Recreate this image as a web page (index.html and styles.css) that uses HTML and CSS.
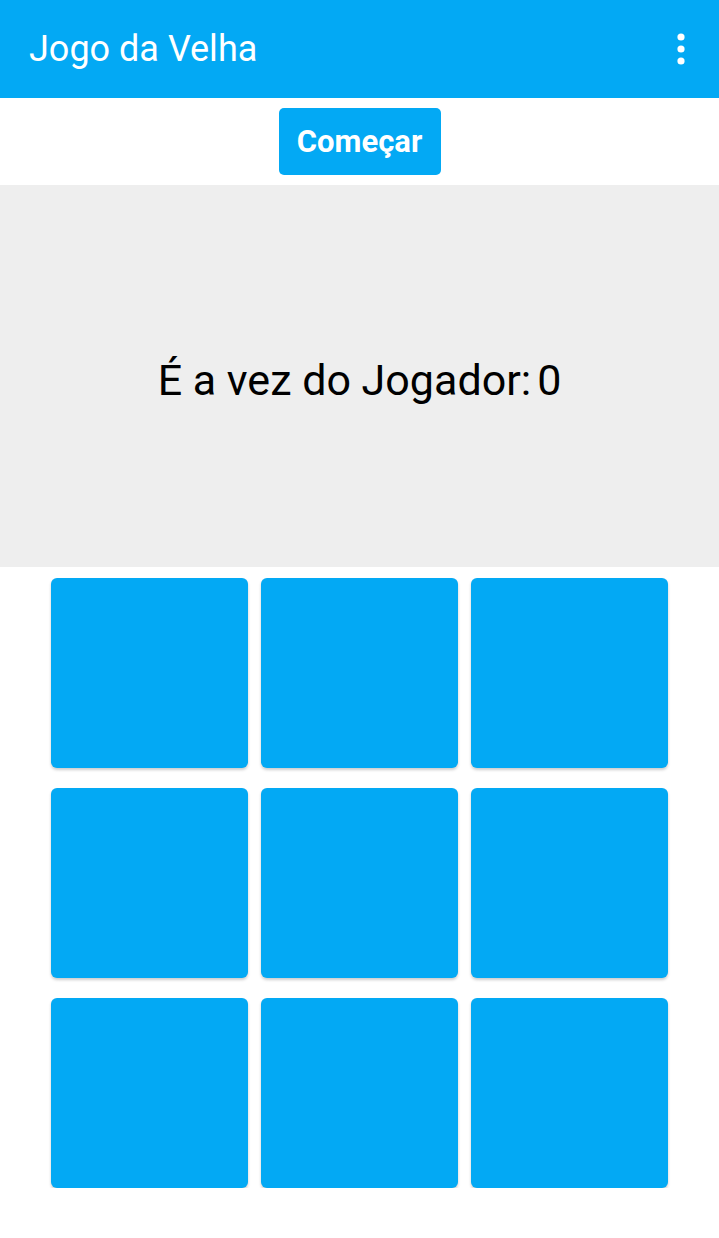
FILE: index.html
```html
<!DOCTYPE html>
<html lang="pt">
<head>
<meta charset="utf-8">
<link rel="stylesheet" href="styles.css">
</head>
<body>
<header class="appbar">
  <h1 class="title">Jogo da Velha</h1>
  <svg class="menu" width="10" height="32" viewBox="0 0 10 32">
    <circle cx="5" cy="4" r="3.6" fill="#fff"/>
    <circle cx="5" cy="16" r="3.6" fill="#fff"/>
    <circle cx="5" cy="28" r="3.6" fill="#fff"/>
  </svg>
</header>
<div class="actions">
  <button class="start">Começar</button>
</div>
<section class="status">
  <p class="turn">É a vez do Jogador:<span class="num">0</span></p>
</section>
<main class="board">
  <div class="cell"></div>
  <div class="cell"></div>
  <div class="cell"></div>
  <div class="cell"></div>
  <div class="cell"></div>
  <div class="cell"></div>
  <div class="cell"></div>
  <div class="cell"></div>
  <div class="cell"></div>
</main>
</body>
</html>
```
FILE: styles.css
```css
* { box-sizing: border-box; }
html, body {
  margin: 0;
  padding: 0;
  background: #fff;
  font-family: Roboto, "Noto Sans", sans-serif;
}
.appbar {
  height: 98px;
  background: #03A9F4;
  display: flex;
  align-items: center;
  justify-content: space-between;
  padding: 0 33px 0 29px;
}
.title {
  margin: 0;
  color: #fff;
  font-weight: 400;
  font-size: 36px;
  line-height: 1;
}
.menu { display: block; }
.actions {
  display: flex;
  justify-content: center;
  padding: 10px 0;
}
.start {
  width: 162px;
  height: 67px;
  border: none;
  border-radius: 5px;
  background: #03A9F4;
  color: #fff;
  font-family: Roboto, sans-serif;
  font-weight: 700;
  font-size: 31px;
  padding: 0;
}
.status {
  height: 382px;
  background: #EEEEEE;
  display: flex;
  align-items: center;
  justify-content: center;
  padding-top: 8px;
}
.turn {
  margin: 0;
  font-size: 43px;
  color: #000;
}
.num { margin-left: 6px; }
.board {
  display: grid;
  grid-template-columns: repeat(3, 197px);
  grid-auto-rows: 190px;
  column-gap: 13px;
  row-gap: 20px;
  justify-content: center;
  padding-top: 11px;
}
.cell {
  background: #03A9F4;
  border-radius: 6px;
  box-shadow: 0 2px 3px rgba(0,0,0,0.2);
}
```
